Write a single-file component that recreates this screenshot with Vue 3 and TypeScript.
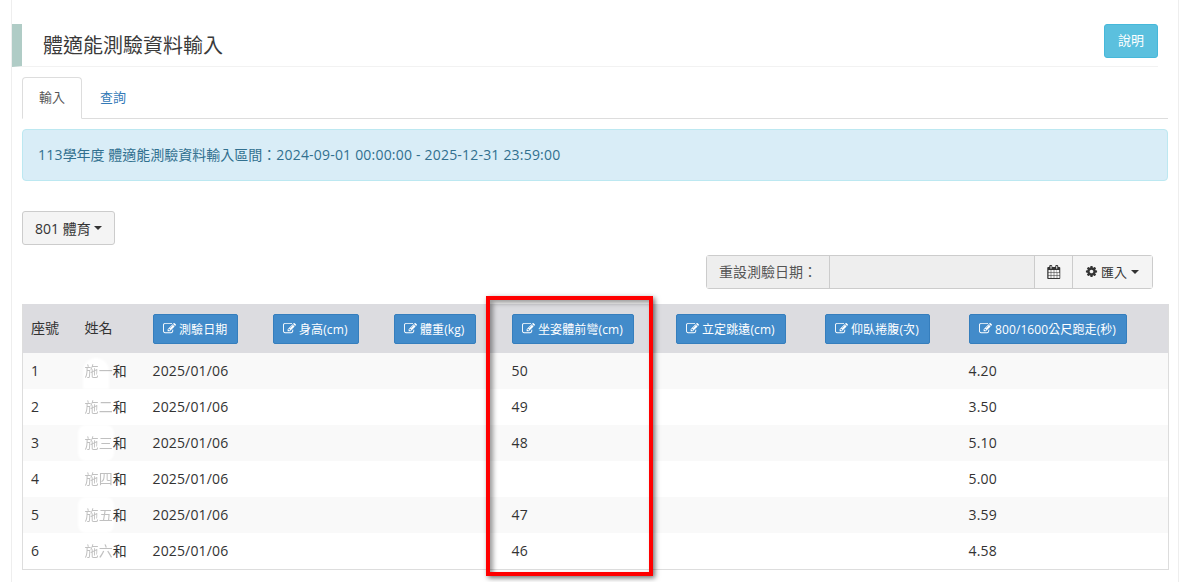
<script setup lang="ts">
const editPath = 'M888 1184l116-116-152-152-116 116v56h96v96h56zm440-720q-16-16-33 1l-350 350q-17 17-1 33t33-1l350-350q17-17 1-33zm80 594v190q0 119-84.5 203.5t-203.5 84.5h-832q-119 0-203.5-84.5t-84.5-203.5v-832q0-119 84.5-203.5t203.5-84.5h832q63 0 117 25 15 7 18 23 3 17-9 29l-49 49q-14 14-32 8-23-6-45-6h-832q-66 0-113 47t-47 113v832q0 66 47 113t113 47h832q66 0 113-47t47-113v-126q0-13 9-22l64-64q15-15 35-7t20 29zm-96-738l288 288-672 672h-288v-288zm444 132l-92 92-288-288 92-92q28-28 68-28t68 28l152 152q28 28 28 68t-28 68z'

const columns: { label: string; width: number }[] = [
  { label: '測驗日期', width: 120 },
  { label: '身高(cm)', width: 121 },
  { label: '體重(kg)', width: 118 },
  { label: '坐姿體前彎(cm)', width: 164 },
  { label: '立定跳遠(cm)', width: 149 },
  { label: '仰臥捲腹(次)', width: 144 },
  { label: '800/1600公尺跑走(秒)', width: 208 },
]

const rows = [
  { no: 1, hidden: '施一', reach: '50', run: '4.20', blob: 'blob-a' },
  { no: 2, hidden: '施二', reach: '49', run: '3.50', blob: 'blob-b' },
  { no: 3, hidden: '施三', reach: '48', run: '5.10', blob: 'blob-c' },
  { no: 4, hidden: '施四', reach: '', run: '5.00', blob: 'blob-b' },
  { no: 5, hidden: '施五', reach: '47', run: '3.59', blob: 'blob-c' },
  { no: 6, hidden: '施六', reach: '46', run: '4.58', blob: '' },
]
</script>

<template>
  <div class="page">
    <header class="head">
      <h1 class="title">體適能測驗資料輸入</h1>
      <button class="btn-info">說明</button>
    </header>

    <main class="content">
      <nav class="tabs">
        <a class="tab active">輸入</a>
        <a class="tab">查詢</a>
      </nav>

      <div class="alert"><span class="num">113</span>學年度 體適能測驗資料輸入區間：<span class="num">2024-09-01 00:00:00 - 2025-12-31 23:59:00</span></div>

      <button class="btn-default class-btn">801 體育<i class="caret"></i></button>

      <div class="tools">
        <div class="group">
          <span class="addon">重設測驗日期：</span>
          <span class="field"></span>
          <span class="cal">
            <svg class="ico-cal" viewBox="0 0 1792 1792"><path d="M192 1664h288v-288h-288v288zm352 0h320v-288h-320v288zm-352-352h288v-320h-288v320zm352 0h320v-320h-320v320zm-352-384h288v-288h-288v288zm736 736h320v-288h-320v288zm-384-736h320v-288h-320v288zm768 736h288v-288h-288v288zm-384-352h320v-320h-320v320zm-352-864v-288q0-13-9.500-22.500t-22.500-9.500h-64q-13 0-22.500 9.500t-9.500 22.500v288q0 13 9.500 22.500t22.500 9.500h64q13 0 22.500-9.500t9.500-22.500zm736 864h288v-320h-288v320zm-384-384h320v-288h-320v288zm352 0h288v-288h-288v288zm32-480v-288q0-13-9.500-22.500t-22.500-9.500h-64q-13 0-22.500 9.500t-9.500 22.500v288q0 13 9.500 22.500t22.500 9.500h64q13 0 22.500-9.500t9.500-22.500zm384-64v1280q0 52-38 90t-90 38h-1408q-52 0-90-38t-38-90v-1280q0-52 38-90t90-38h128v-96q0-66 47-113t113-47h64q66 0 113 47t47 113v96h384v-96q0-66 47-113t113-47h64q66 0 113 47t47 113v96h128q52 0 90 38t38 90z"/></svg>
          </span>
          <span class="import">
            <svg class="ico-cog" viewBox="0 0 1792 1792"><path d="M1152 896q0-106-75-181t-181-75-181 75-75 181 75 181 181 75 181-75 75-181zm512-109v222q0 12-8 23t-20 13l-185 28q-19 54-39 91 35 50 107 138 10 12 10 25t-9 23q-27 37-99 108t-94 71q-12 0-26-9l-138-108q-44 23-91 38-16 136-29 186-7 28-36 28h-222q-14 0-24.500-8.500t-11.500-21.500l-28-184q-49-16-90-37l-141 107q-10 9-25 9-14 0-25-11-126-114-165-168-7-10-7-23 0-12 8-23 15-21 51-66.500t54-70.500q-27-50-41-99l-183-27q-13-2-21-12.500t-8-23.500v-222q0-12 8-23t19-13l186-28q14-46 39-92-40-57-107-138-10-12-10-24 0-10 9-23 26-36 98.500-107.500t94.500-71.500q13 0 26 10l138 107q44-23 91-38 16-136 29-186 7-28 36-28h222q14 0 24.500 8.500t11.500 21.500l28 184q49 16 90 37l142-107q9-9 24-9 13 0 25 10 129 119 165 170 7 8 7 22 0 12-8 23-15 21-51 66.500t-54 70.500q26 50 41 98l183 28q13 2 21 12.500t8 23.500z"/></svg>
            匯入<i class="caret"></i>
          </span>
        </div>
      </div>

      <table class="grid">
        <colgroup>
          <col class="col-no" />
          <col class="col-name" />
          <col v-for="c in columns" :key="c.label" :style="{ width: c.width + 'px' }" />
        </colgroup>
        <thead>
          <tr>
            <th class="label">座號</th>
            <th class="label">姓名</th>
            <th v-for="c in columns" :key="c.label">
              <button class="btn-primary">
                <svg class="ico-edit" viewBox="0 0 1792 1792"><path :d="editPath" /></svg>
                {{ c.label }}
              </button>
            </th>
          </tr>
        </thead>
        <tbody>
          <tr v-for="r in rows" :key="r.no">
            <td>{{ r.no }}</td>
            <td class="name">
              <span v-if="r.blob" class="blob" :class="r.blob"></span>
              <span class="name-text"><span class="faded">{{ r.hidden }}</span>和</span>
            </td>
            <td>2025/01/06</td>
            <td></td>
            <td></td>
            <td>{{ r.reach }}</td>
            <td></td>
            <td></td>
            <td>{{ r.run }}</td>
          </tr>
        </tbody>
      </table>
    </main>

    <div class="highlight"></div>
  </div>
</template>

<style>
html,
body {
  margin: 0;
  background: #fff;
  overflow: hidden;
}
</style>

<style scoped>
.page {
  position: relative;
  box-sizing: border-box;
  width: 1168px;
  height: 582px;
  margin-left: 11px;
  padding-top: 24px;
  border-left: 1px solid #eee;
  border-right: 1px solid #eee;
  overflow: hidden;
  font-family: "Open Sans", "Noto Sans CJK TC", sans-serif;
  font-size: 14px;
  color: #333;
}
.head {
  box-sizing: border-box;
  display: flex;
  justify-content: space-between;
  align-items: flex-start;
  height: 43px;
  width: 1146px;
  border-left: 10px solid #b0ccc6;
  border-bottom: 1px solid #f2f2f2;
}
.title {
  margin: 9px 0 0 21px;
  font-size: 20px;
  font-weight: 400;
  line-height: 26px;
  color: #3a3a3a;
}
.btn-info {
  width: 54px;
  height: 34px;
  padding: 0 0 3px;
  border: 1px solid #46b8da;
  border-radius: 3px;
  background: #5bc0de;
  color: #fff;
  font: inherit;
  font-size: 13px;
}
.content {
  padding: 10px 10px 0;
}
.tabs {
  display: flex;
  height: 42px;
  box-sizing: border-box;
  border-bottom: 1px solid #ddd;
}
.tab {
  box-sizing: border-box;
  height: 42px;
  padding: 0 16px;
  line-height: 38px;
  font-size: 13px;
  color: #337ab7;
  border: 1px solid transparent;
  border-radius: 4px 4px 0 0;
}
.tab.active {
  color: #555;
  background: #fff;
  border-color: #ddd #ddd #fff;
  margin-right: 1px;
}
.alert {
  box-sizing: border-box;
  height: 52px;
  margin-top: 10px;
  padding: 0 15px;
  line-height: 50px;
  color: #31708f;
  background: #d9edf7;
  border: 1px solid #bce8f1;
  border-radius: 4px;
}
.num {
  letter-spacing: 0.2px;
}
.btn-default {
  display: flex;
  align-items: center;
  box-sizing: border-box;
  border: 1px solid #ccc;
  border-radius: 3px;
  background: #f4f4f4;
  color: #333;
  font: inherit;
}
.class-btn {
  width: 93px;
  height: 34px;
  margin-top: 30px;
  padding: 0 12px;
}
.caret {
  display: inline-block;
  flex: none;
  width: 0;
  height: 0;
  margin-left: 3px;
  border-top: 4px solid #333;
  border-left: 4px solid transparent;
  border-right: 4px solid transparent;
}
.tools {
  display: flex;
  justify-content: flex-end;
  margin-top: 10px;
  padding-right: 15px;
}
.group {
  display: flex;
  box-sizing: border-box;
  width: 447px;
  height: 34px;
  border: 1px solid #ccc;
  border-radius: 3px;
  color: #555;
}
.addon {
  box-sizing: border-box;
  width: 123px;
  padding-left: 12px;
  line-height: 32px;
  background: #eee;
  border-right: 1px solid #ccc;
}
.field {
  box-sizing: border-box;
  width: 205px;
  background: #eee;
  border-right: 1px solid #ccc;
}
.cal {
  display: flex;
  align-items: center;
  justify-content: center;
  box-sizing: border-box;
  width: 38px;
  background: #f4f4f4;
  border-right: 1px solid #ccc;
}
.ico-cal {
  width: 14px;
  height: 14px;
  fill: #333;
}
.import {
  display: flex;
  align-items: center;
  flex: 1;
  padding-left: 12px;
  padding-bottom: 1px;
  gap: 3px;
  font-size: 13px;
  background: #f4f4f4;
  color: #333;
}
.import .caret {
  margin-left: 1px;
}
.ico-cog {
  width: 13px;
  height: 13px;
  fill: #333;
}
.grid {
  box-sizing: border-box;
  width: 1146px;
  margin-top: 15px;
  table-layout: fixed;
  border-collapse: collapse;
  border: 1px solid #ddd;
  border-top: 0;
}
.col-no {
  width: 54px;
}
.col-name {
  width: 68px;
}
th {
  box-sizing: border-box;
  height: 49px;
  padding: 0 8px;
  text-align: left;
  font-weight: 400;
  background: #dcdce0;
  overflow: visible;
  white-space: nowrap;
}
th.label {
  padding-bottom: 3px;
}
td {
  height: 36px;
  padding: 0 8px;
  line-height: 20px;
  box-sizing: border-box;
  letter-spacing: 0.15px;
}
tbody tr:nth-child(odd) td {
  background: #f9f9f9;
}
.btn-primary {
  display: inline-flex;
  align-items: center;
  gap: 3px;
  height: 30px;
  padding: 0 10px 0 9.5px;
  border: 1px solid #357ebd;
  border-radius: 2px;
  background: #428bca;
  color: #fff;
  font: inherit;
  font-size: 12px;
  letter-spacing: 0.1px;
  vertical-align: middle;
}
.ico-edit {
  width: 13px;
  height: 13px;
  fill: #fff;
}
.name {
  position: relative;
}
.name-text {
  position: relative;
  z-index: 1;
}
.faded {
  opacity: 0.3;
}
.blob {
  position: absolute;
  top: 0;
  bottom: 0;
  background: #fff;
  filter: blur(1px);
}
.blob-a {
  left: 6px;
  width: 26px;
  top: 5px;
  border-radius: 13px 13px 0 0;
}
.blob-b {
  left: 8px;
  width: 24px;
}
.blob-c {
  left: 1px;
  width: 36px;
  border-radius: 8px;
}
.highlight {
  position: absolute;
  left: 474px;
  top: 296px;
  box-sizing: border-box;
  width: 167px;
  height: 280px;
  border: 4px solid #f00;
  box-shadow: 2px 2px 5px rgba(0, 0, 0, 0.55), inset 3px 3px 5px rgba(0, 0, 0, 0.4);
  pointer-events: none;
}
</style>
